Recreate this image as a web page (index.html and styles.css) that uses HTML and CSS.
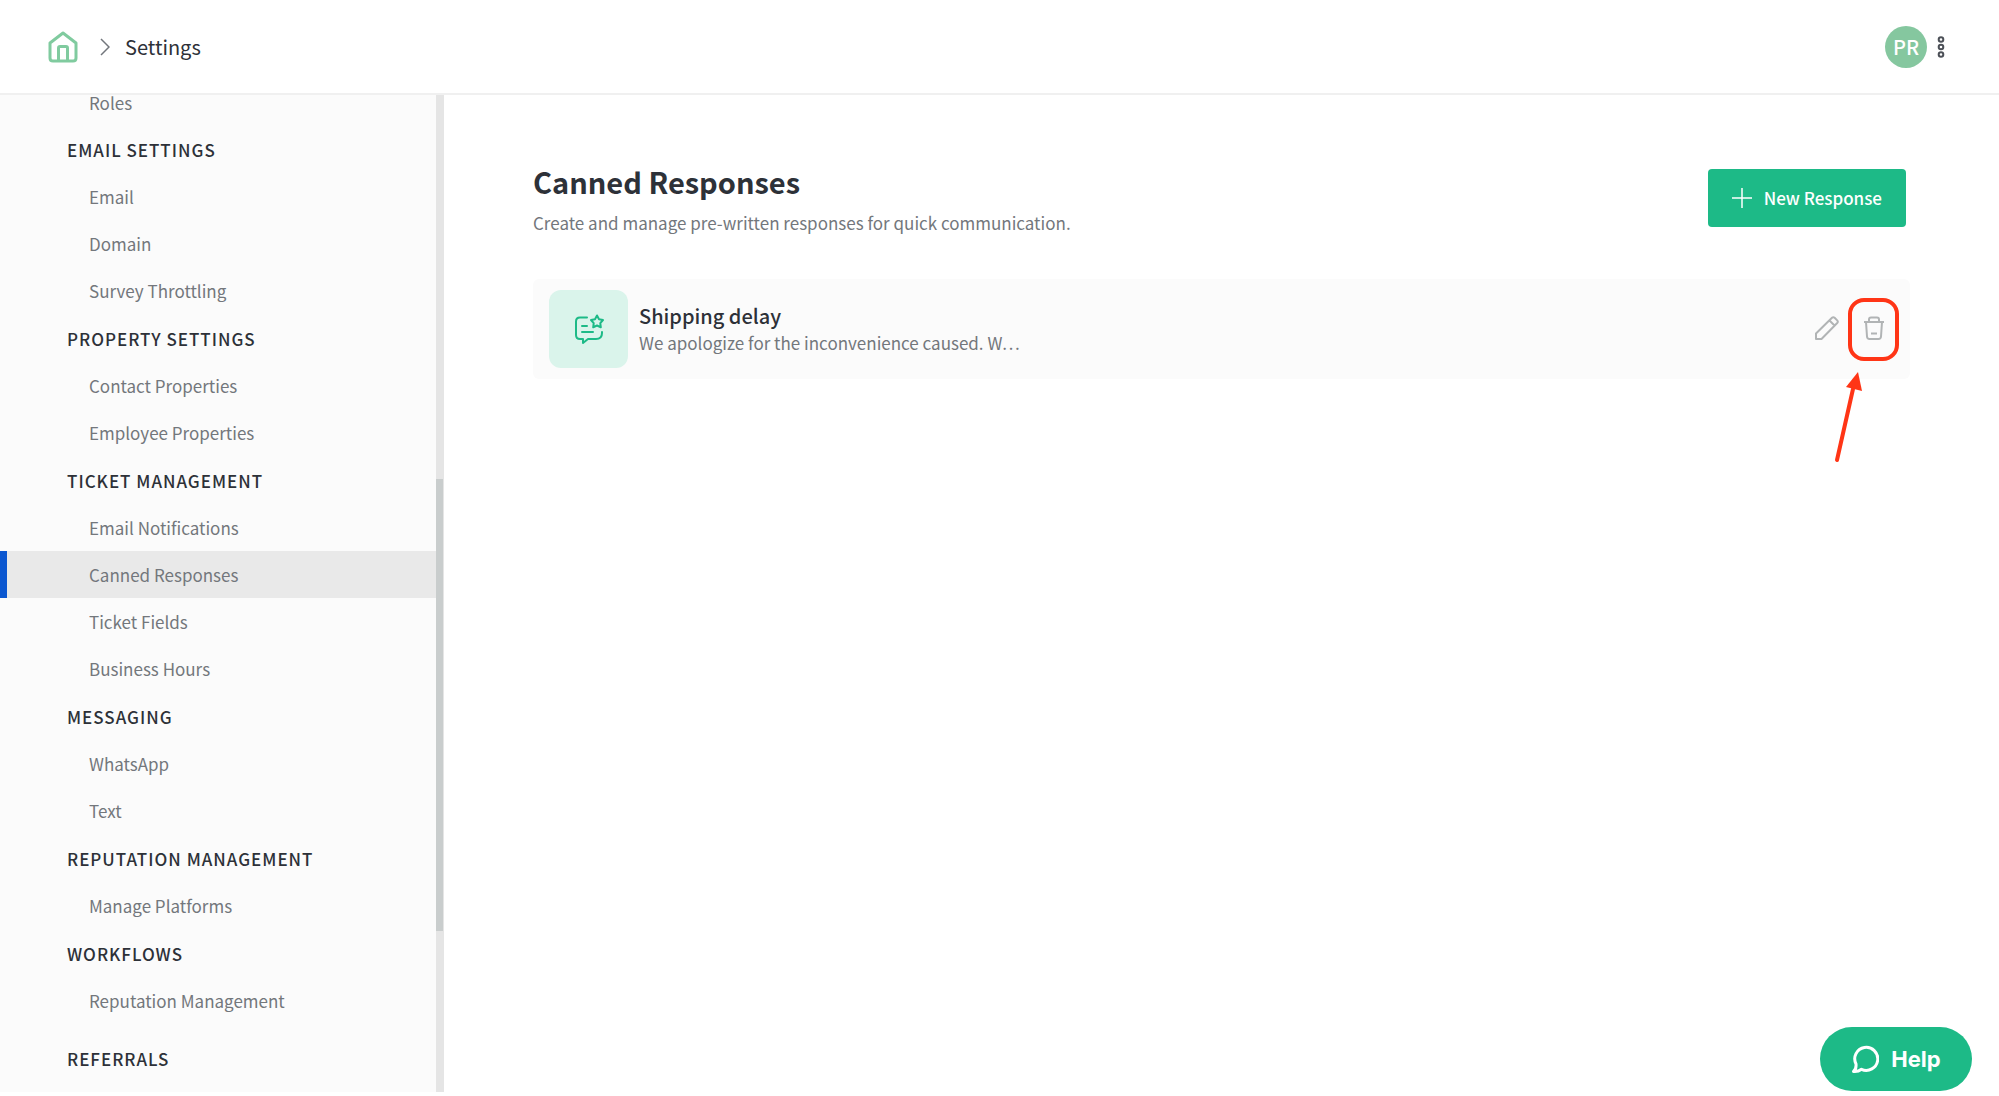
FILE: index.html
```html
<!DOCTYPE html>
<html lang="en">
<head>
<meta charset="utf-8">
<meta name="viewport" content="width=device-width, initial-scale=1">
<title>Settings - Canned Responses</title>
<link rel="stylesheet" href="styles.css">
</head>
<body>
<header class="topbar">
  <nav class="breadcrumb" aria-label="Breadcrumb">
    <a class="home" href="#" aria-label="Home">
      <svg width="30" height="32" viewBox="0 0 30 32" fill="none" stroke="currentColor" stroke-width="3" stroke-linejoin="round"><path d="M2 12 15 2l13 10v15q0 3-3 3H5q-3 0-3-3z"/><path d="M10.500 30V17q0-1.500 1.500-1.500h6q1.500 0 1.500 1.500v13"/></svg>
    </a>
    <svg class="chevron" width="10" height="18" viewBox="0 0 10 18" fill="none" stroke="currentColor" stroke-width="1.500"><path d="m1 1 8 8-8 8"/></svg>
    <a class="crumb" href="#">Settings</a>
  </nav>
  <div class="account">
    <button class="avatar" type="button">PR</button>
    <button class="more" type="button" aria-label="More options">
      <svg width="8" height="22" viewBox="0 0 8 22" fill="none" stroke="currentColor" stroke-width="2"><circle cx="4" cy="3.500" r="2.300"/><circle cx="4" cy="11" r="2.300"/><circle cx="4" cy="18.500" r="2.300"/></svg>
    </button>
  </div>
</header>
<div class="layout">
  <aside class="sidebar">
    <nav class="menu" aria-label="Settings">
      <section class="group"><a class="item item-first" href="#">Roles</a></section>
      <section class="group">
        <h2 class="group-title">EMAIL SETTINGS</h2>
        <a class="item" href="#">Email</a>
        <a class="item" href="#">Domain</a>
        <a class="item" href="#">Survey Throttling</a>
      </section>
      <section class="group">
        <h2 class="group-title">PROPERTY SETTINGS</h2>
        <a class="item" href="#">Contact Properties</a>
        <a class="item" href="#">Employee Properties</a>
      </section>
      <section class="group">
        <h2 class="group-title">TICKET MANAGEMENT</h2>
        <a class="item" href="#">Email Notifications</a>
        <a class="item item-active" href="#" aria-current="page">Canned Responses</a>
        <a class="item" href="#">Ticket Fields</a>
        <a class="item" href="#">Business Hours</a>
      </section>
      <section class="group">
        <h2 class="group-title">MESSAGING</h2>
        <a class="item" href="#">WhatsApp</a>
        <a class="item" href="#">Text</a>
      </section>
      <section class="group">
        <h2 class="group-title">REPUTATION MANAGEMENT</h2>
        <a class="item" href="#">Manage Platforms</a>
      </section>
      <section class="group">
        <h2 class="group-title">WORKFLOWS</h2>
        <a class="item" href="#">Reputation Management</a>
      </section>
      <section class="group group-spaced">
        <h2 class="group-title">REFERRALS</h2>
      </section>
    </nav>
    <div class="scrollbar"><div class="thumb"></div></div>
  </aside>
  <main class="content">
    <div class="page-head">
      <div>
        <h1 class="page-title">Canned Responses</h1>
        <p class="page-text">Create and manage pre-written responses for quick communication.</p>
      </div>
      <button class="new-button" type="button">
        <svg width="20" height="20" viewBox="0 0 20 20" fill="none" stroke="currentColor" stroke-width="1.500"><path d="M10 0v20M0 10h20"/></svg>
        New Response
      </button>
    </div>
    <article class="card">
      <div class="tile">
        <svg width="32" height="32" viewBox="0 0 32 32" fill="none" stroke="currentColor" stroke-width="2" stroke-linecap="round" stroke-linejoin="round"><path d="M14 4.500H7q-4 0-4 4V22q0 4 4 4h3v4l5-4h8q6 0 6-6v-1"/><path d="M9 13h5M9 19h11"/><path d="m24 2.500 2 3.700 4 .8-2.700 3.100.5 4.200-3.800-1.800-3.800 1.800.5-4.200L18 7l4-.8z"/></svg>
      </div>
      <div class="card-body">
        <h3 class="card-title">Shipping delay</h3>
        <p class="card-text">We apologize for the inconvenience caused. W…</p>
      </div>
      <div class="actions">
        <button class="action" type="button" aria-label="Edit">
          <svg width="24" height="24" viewBox="0 0 24 24" fill="none" stroke="currentColor" stroke-width="2" stroke-linejoin="round"><path d="M1 23v-5.500L17 1.800q1.300-1.200 2.600 0l2.600 2.600q1.200 1.300 0 2.600L6.500 23zM14.500 4.500l5 5"/></svg>
        </button>
        <button class="action action-marked" type="button" aria-label="Delete">
          <svg width="22" height="24" viewBox="0 0 22 24" fill="none" stroke="currentColor" stroke-width="2" stroke-linejoin="round"><path d="M1 6h20M3 6l1 14.500q.2 2.500 2.500 2.500h9q2.300 0 2.500-2.500L19 6M6 6V3.500Q6 1.500 8 1.500h6q2 0 2 2V6M8 17.500h6"/></svg>
          <svg class="arrow" width="30" height="92" viewBox="0 0 30 92" aria-hidden="true"><path d="M3 88 19 17" fill="none" stroke="currentColor" stroke-width="4" stroke-linecap="round"/><path d="m24 0 4 19-16-4z" fill="currentColor"/></svg>
        </button>
      </div>
    </article>
  </main>
</div>
<button class="help" type="button">
  <svg width="28" height="30" viewBox="0 0 28 30" fill="none" stroke="currentColor" stroke-width="3" stroke-linejoin="round" stroke-linecap="round"><path d="M5 20A11.500 11.500 0 1 1 10.500 25.300Q7 28 2.500 27.500 5.500 25 5 20z"/></svg>
  Help
</button>
</body>
</html>
```
FILE: styles.css
```css
* { box-sizing: border-box; }

body {
  margin: 0;
  height: 100vh;
  padding-bottom: 4px;
  display: flex;
  flex-direction: column;
  overflow: hidden;
  background: #fff;
  color: #2d3138;
  font-family: "Noto Sans CJK SC", "Noto Sans", sans-serif;
  font-size: 17px;
  line-height: 24px;
}

h1, h2, h3, p { margin: 0; }
a { color: inherit; text-decoration: none; }
svg { display: block; flex: none; }
button {
  border: 0;
  padding: 0;
  background: none;
  color: inherit;
  font: inherit;
  cursor: pointer;
}

.topbar {
  flex: none;
  display: flex;
  justify-content: space-between;
  align-items: center;
  height: 95px;
  padding: 0 54px 0 48px;
  border-bottom: 2px solid #f0f0f0;
}
.breadcrumb { display: flex; align-items: center; }
.home { color: #80cb9f; }
.chevron { margin: 0 15px 0 22px; color: #72767c; }
.crumb { font-size: 20px; }
.account { display: flex; align-items: center; gap: 10px; }
.avatar {
  width: 42px;
  height: 42px;
  border-radius: 50%;
  background: #85c79f;
  color: #fff;
  font-size: 20px;
  font-weight: 500;
}
.more { color: #4c5057; }

.layout { flex: 1; min-height: 0; display: flex; }
.sidebar {
  flex: none;
  display: flex;
  width: 444px;
  background: #fbfbfb;
}
.menu { flex: 1; }
.group { margin-bottom: 1px; }
.group-spaced { margin-top: 11px; }
.group-title {
  padding-left: 67px;
  font-size: 17px;
  font-weight: 500;
  line-height: 47px;
  letter-spacing: 1px;
}
.item {
  display: block;
  padding-left: 89px;
  color: #73777c;
  line-height: 47px;
}
.item-first { padding-bottom: 14px; line-height: 16px; }
.item-active {
  padding-left: 82px;
  border-left: 7px solid #0b57d0;
  background: #e9e9e9;
}
.scrollbar {
  width: 8px;
  display: grid;
  grid-template-rows: 384fr 453fr 161fr;
  background: #e5e5e5;
}
.thumb { grid-row: 2; margin-right: 1px; background: #c9cdcd; }

.content { flex: 1; min-width: 0; padding: 66px 89px 0; }
.page-head {
  display: flex;
  justify-content: space-between;
  align-items: center;
  padding: 0 4px 0 0;
}
.page-title { font-size: 29px; font-weight: 700; line-height: 40px; }
.page-text { padding-top: 10px; color: #73777c; }
.new-button {
  display: flex;
  align-items: center;
  gap: 12px;
  height: 58px;
  padding: 0 24px;
  border-radius: 4px;
  background: #1dba87;
  color: #fff;
  font-weight: 500;
}
.card {
  display: flex;
  align-items: center;
  height: 100px;
  margin-top: 44px;
  padding: 0 11px 0 16px;
  border-radius: 6px;
  background: #fbfbfb;
}
.tile {
  display: grid;
  place-items: center;
  width: 79px;
  height: 78px;
  border-radius: 12px;
  background: #daf4eb;
  color: #1dba87;
}
.card-body { flex: 1; padding-left: 11px; }
.card-title { padding-bottom: 2px; font-size: 20px; font-weight: 500; line-height: 26px; }
.card-text { color: #73777c; }
.actions { display: flex; align-items: center; gap: 9px; }
.action { display: grid; place-items: center; padding-bottom: 2px; color: #b1b4b5; }
.action-marked {
  position: relative;
  width: 51px;
  height: 63px;
  border: 4px solid #ff3516;
  border-radius: 16px;
}
.arrow { position: absolute; top: 70px; left: -18px; color: #ff3516; }

.help {
  position: fixed;
  right: 27px;
  bottom: 5px;
  display: flex;
  align-items: center;
  justify-content: center;
  gap: 12px;
  width: 152px;
  height: 64px;
  border-radius: 32px;
  background: #1dba87;
  color: #fff;
  font-family: Inter, "Open Sans", sans-serif;
  font-size: 22px;
  font-weight: 700;
}
```
